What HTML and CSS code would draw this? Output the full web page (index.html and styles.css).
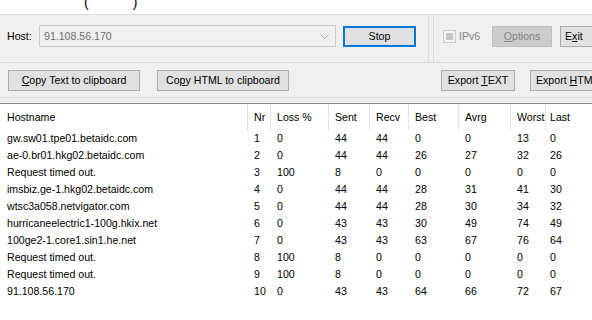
FILE: index.html
```html
<!DOCTYPE html>
<html lang="en">
<head>
  <meta charset="UTF-8">
  <title>WinMTR</title>
  <link rel="stylesheet" href="styles.css">
</head>
<body>

  <div class="caption"><span class="paren">(</span><span class="paren right">)</span></div>

  <div class="toolbar">
    <div class="group host-group">
      <label class="host-label">Host:</label>
      <div class="combo">
        <span class="combo-text">91.108.56.170</span>
        <svg class="combo-arrow" width="9" height="5" viewBox="0 0 9 5"><path d="M0.5 0.5 L4.5 4.5 L8.5 0.5" fill="none" stroke="#a8a8a8" stroke-width="1"/></svg>
      </div>
      <button class="btn btn-stop">Stop</button>
    </div>
    <div class="group opts-group">
      <span class="check"><span class="check-mark"></span></span>
      <span class="check-label">IPv6</span>
      <button class="btn btn-disabled"><u>O</u>ptions</button>
      <button class="btn btn-exit">E<u>x</u>it</button>
    </div>
  </div>

  <div class="actions">
    <button class="btn btn-copy-text"><u>C</u>opy Text to clipboard</button>
    <button class="btn btn-copy-html">Co<u>p</u>y HTML to clipboard</button>
    <button class="btn btn-export-text">Export <u>T</u>EXT</button>
    <button class="btn btn-export-html">Export <u>H</u>TML</button>
  </div>

  <div class="list">
    <div class="row head">
      <div>Hostname</div><div>Nr</div><div>Loss %</div><div>Sent</div><div>Recv</div><div>Best</div><div>Avrg</div><div>Worst</div><div>Last</div>
    </div>
    <div id="rows"></div>
  </div>

  <script>
    const hops = [
      ['gw.sw01.tpe01.betaidc.com', 1, 0, 44, 44, 0, 0, 13, 0],
      ['ae-0.br01.hkg02.betaidc.com', 2, 0, 44, 44, 26, 27, 32, 26],
      ['Request timed out.', 3, 100, 8, 0, 0, 0, 0, 0],
      ['imsbiz.ge-1.hkg02.betaidc.com', 4, 0, 44, 44, 28, 31, 41, 30],
      ['wtsc3a058.netvigator.com', 5, 0, 44, 44, 28, 30, 34, 32],
      ['hurricaneelectric1-100g.hkix.net', 6, 0, 43, 43, 30, 49, 74, 49],
      ['100ge2-1.core1.sin1.he.net', 7, 0, 43, 43, 63, 67, 76, 64],
      ['Request timed out.', 8, 100, 8, 0, 0, 0, 0, 0],
      ['Request timed out.', 9, 100, 8, 0, 0, 0, 0, 0],
      ['91.108.56.170', 10, 0, 43, 43, 64, 66, 72, 67]
    ];

    const rows = document.getElementById('rows');
    hops.forEach(hop => {
      const row = document.createElement('div');
      row.className = 'row';
      hop.forEach(value => {
        const cell = document.createElement('div');
        cell.textContent = value;
        row.appendChild(cell);
      });
      rows.appendChild(row);
    });
  </script>
</body>
</html>
```

FILE: styles.css
```css
* { margin: 0; padding: 0; box-sizing: border-box; }

body {
  font-family: 'Liberation Sans', Arial, sans-serif;
  font-size: 10.6px;
  background: #f0f0f0;
  color: #000;
  width: 592px;
  height: 320px;
  overflow: hidden;
}

.caption {
  height: 14px;
  background: #fff;
  overflow: hidden;
  padding-left: 84px;
  line-height: 0;
}

.paren {
  display: inline-block;
  font-size: 14px;
  line-height: 14px;
  margin-top: -5px;
}

.paren.right { margin-left: 44px; }

.toolbar {
  display: flex;
  height: 49px;
  border-top: 1px solid #dcdcdc;
  border-bottom: 1px solid #dcdcdc;
}

.group {
  display: flex;
  align-items: center;
  padding-bottom: 5px;
}

.host-group {
  width: 429px;
  border-right: 1px solid #dcdcdc;
  padding-left: 7px;
}

.host-label { width: 32px; }

.combo {
  width: 297px;
  height: 22px;
  border: 1px solid #cccccc;
  background: #f0f0f0;
  display: flex;
  align-items: center;
  padding-left: 4px;
  padding-right: 6px;
  color: #6d6d6d;
}

.combo-text { flex: 1; }

.btn {
  font-family: inherit;
  font-size: 10.6px;
  height: 21px;
  background: #e1e1e1;
  border: 1px solid #adadad;
  color: #000;
  flex-shrink: 0;
  white-space: nowrap;
}

.btn-stop {
  width: 73px;
  margin-left: 7px;
  border: 2px solid #0078d7;
}

.opts-group {
  flex: 1;
  margin-left: 4px;
  border-left: 1px solid #dcdcdc;
  padding-left: 9px;
  overflow: hidden;
}

.check {
  width: 13px;
  height: 13px;
  border: 1px solid #cccccc;
  background: #f4f4f4;
  padding: 2px;
  flex-shrink: 0;
}

.check-mark {
  display: block;
  width: 7px;
  height: 7px;
  background: #c6c6c6;
}

.check-label {
  color: #838383;
  margin-left: 3px;
  width: 33px;
  flex-shrink: 0;
}

.btn-disabled {
  width: 60px;
  background: #cccccc;
  border-color: #bfbfbf;
  color: #838383;
}

.btn-exit {
  width: 64px;
  margin-left: 8px;
  text-align: left;
  padding-left: 4px;
}

.actions {
  display: flex;
  align-items: center;
  height: 35px;
  padding-left: 8px;
  border-bottom: 1px solid #dcdcdc;
  overflow: hidden;
}

.btn-copy-text { width: 132px; }
.btn-copy-html { width: 132px; margin-left: 17px; }
.btn-export-text { width: 74px; margin-left: 152px; }
.btn-export-html { width: 74px; margin-left: 15px; text-align: left; padding-left: 5px; }

.list {
  margin-top: 5px;
  border-top: 1px solid #828790;
  background: #fff;
  height: 220px;
}

.row {
  display: grid;
  grid-template-columns: 248px 23px 58px 41px 39px 50px 52px 35px 1fr;
  height: 17px;
  line-height: 17px;
  white-space: nowrap;
}

.row > div {
  padding-left: 6px;
  overflow: hidden;
}

.row > div:first-child { padding-left: 7px; }
.row > div:last-child { padding-left: 4px; }

.row.head {
  height: 26px;
  line-height: 26px;
}

.row.head > div {
  border-right: 1px solid #e5e5e5;
}

.row.head > div:last-child { border-right: none; }
```
